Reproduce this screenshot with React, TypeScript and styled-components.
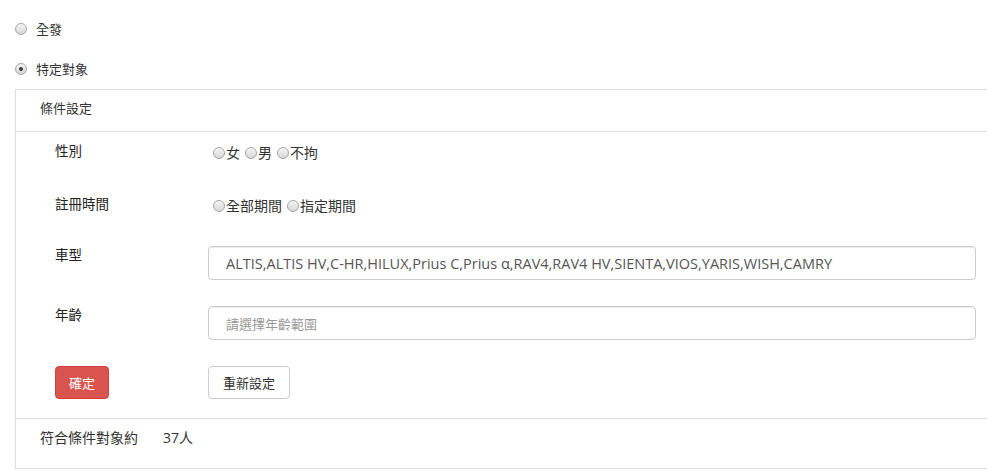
import React from "react";
import styled, { createGlobalStyle } from "styled-components";

const GlobalStyle = createGlobalStyle`
  html, body {
    margin: 0;
    padding: 0;
    background: #fff;
    overflow: hidden;
  }
  body {
    font-family: "Open Sans", "Noto Sans CJK TC", sans-serif;
    font-size: 13px;
    color: #333;
  }
`;

const Page = styled.div({
  padding: "0 0 0 15px",
});

const TopOptions = styled.div({
  display: "flex",
  flexDirection: "column",
  gap: "20px",
  padding: "19px 0 10px 0",
});

const TopOption = styled.label({
  display: "flex",
  alignItems: "center",
  gap: "9px",
  height: "20px",
  fontSize: "13px",
  lineHeight: "20px",
});

const RadioDot = styled.span<{ $checked?: boolean }>`
  position: relative;
  display: inline-block;
  width: 12px;
  height: 12px;
  border-radius: 50%;
  border: 1px solid #a6a6a6;
  background: linear-gradient(#f6f6f6, #d6d6d6);
  box-sizing: border-box;
  flex-shrink: 0;
  &::after {
    content: "";
    display: ${(p) => (p.$checked ? "block" : "none")};
    position: absolute;
    left: 50%;
    top: 50%;
    width: 4px;
    height: 4px;
    margin: -2px 0 0 -2px;
    border-radius: 50%;
    background: #3c3c3c;
  }
`;

const Panel = styled.div({
  border: "1px solid #ddd",
  borderRight: "none",
  marginRight: "-12px",
});

const PanelHeading = styled.div({
  padding: "8px 24px 13px",
  lineHeight: "20px",
  borderBottom: "1px solid #ddd",
  fontSize: "13px",
});

const PanelBody = styled.div({
  padding: "9px 23px 19px 39px",
});

const FormRow = styled.div<{ $height: number }>`
  display: grid;
  grid-template-columns: 153px 1fr;
  height: ${(p) => p.$height}px;
  align-items: start;
`;

const FieldLabel = styled.div({
  lineHeight: "20px",
  fontSize: "13.5px",
  color: "#222",
});

const RadioGroup = styled.div({
  display: "flex",
  alignItems: "center",
  paddingTop: "2px",
  paddingLeft: "2px",
  lineHeight: "20px",
  fontSize: "14px",
});

const RadioItem = styled.label({
  display: "inline-flex",
  alignItems: "center",
  marginRight: "2px",
  "& > span": {
    margin: "0 1px 0 3px",
  },
});

const TextInput = styled.input({
  display: "block",
  width: "100%",
  height: "34px",
  boxSizing: "border-box",
  margin: "1px 0 0 0",
  padding: "6px 17px",
  border: "1px solid #ccc",
  borderRadius: "4px",
  fontFamily: '"Open Sans", "Noto Sans CJK TC", sans-serif',
  fontSize: "14.5px",
  color: "#555",
  boxShadow: "inset 0 1px 1px rgba(0,0,0,.075)",
  outline: "none",
  "&::placeholder": {
    color: "#999",
    fontSize: "13px",
  },
});

const ButtonRow = styled.div({
  display: "grid",
  gridTemplateColumns: "153px 1fr",
  alignItems: "start",
});

const Button = styled.button<{ $danger?: boolean }>`
  justify-self: start;
  height: 33px;
  margin-top: 1px;
  padding: 0 ${(p) => (p.$danger ? 13 : 14)}px;
  border-radius: 4px;
  font-family: "Open Sans", "Noto Sans CJK TC", sans-serif;
  font-size: 13px;
  line-height: 20px;
  cursor: pointer;
  border: 1px solid ${(p) => (p.$danger ? "#d43f3a" : "#ccc")};
  background: ${(p) => (p.$danger ? "#d9534f" : "#fff")};
  color: ${(p) => (p.$danger ? "#fff" : "#333")};
`;

const PanelFooter = styled.div({
  padding: "9px 24px 20px",
  lineHeight: "20px",
  borderTop: "1px solid #ddd",
  fontSize: "14px",
});

const Count = styled.span({
  marginLeft: "25px",
});

const Radio = ({ label }: { label: string }) => (
  <RadioItem>
    <RadioDot />
    {label}
  </RadioItem>
);

const App = () => {
  return (
    <>
      <GlobalStyle />
      <Page>
        <TopOptions>
          <TopOption>
            <RadioDot />
            全發
          </TopOption>
          <TopOption>
            <RadioDot $checked />
            特定對象
          </TopOption>
        </TopOptions>
        <Panel>
          <PanelHeading>條件設定</PanelHeading>
          <PanelBody>
            <FormRow $height={53}>
              <FieldLabel>性別</FieldLabel>
              <RadioGroup>
                <Radio label="女" />
                <Radio label="男" />
                <Radio label="不拘" />
              </RadioGroup>
            </FormRow>
            <FormRow $height={51}>
              <FieldLabel>註冊時間</FieldLabel>
              <RadioGroup>
                <Radio label="全部期間" />
                <Radio label="指定期間" />
              </RadioGroup>
            </FormRow>
            <FormRow $height={60}>
              <FieldLabel>車型</FieldLabel>
              <TextInput
                readOnly
                value="ALTIS,ALTIS HV,C-HR,HILUX,Prius C,Prius α,RAV4,RAV4 HV,SIENTA,VIOS,YARIS,WISH,CAMRY"
              />
            </FormRow>
            <FormRow $height={60}>
              <FieldLabel>年齡</FieldLabel>
              <TextInput placeholder="請選擇年齡範圍" />
            </FormRow>
            <ButtonRow>
              <Button $danger>確定</Button>
              <Button>重新設定</Button>
            </ButtonRow>
          </PanelBody>
          <PanelFooter>
            <span>符合條件對象約</span>
            <Count>37人</Count>
          </PanelFooter>
        </Panel>
      </Page>
    </>
  );
};

export default App;
